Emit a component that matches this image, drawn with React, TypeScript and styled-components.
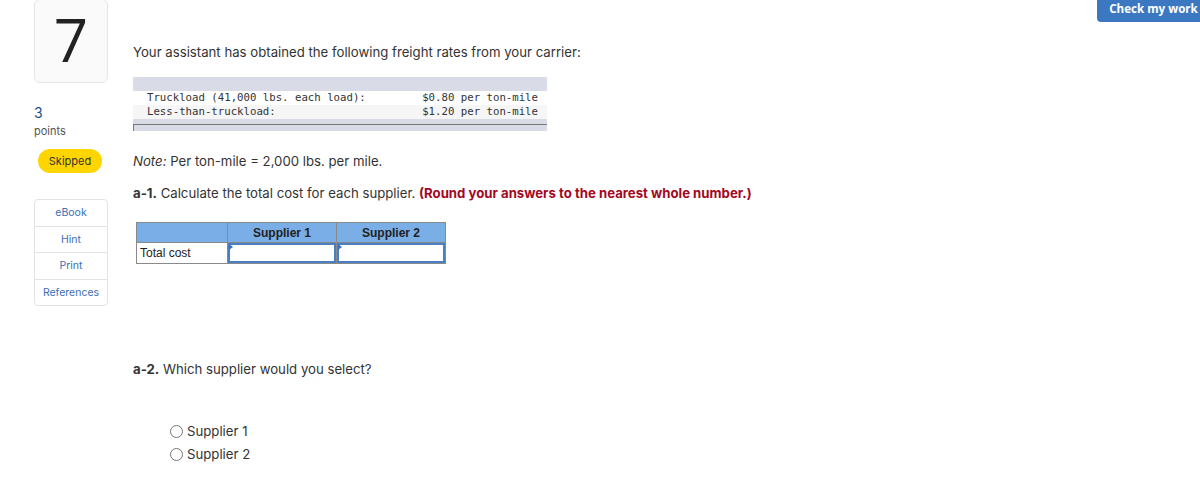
import React from 'react';
import styled, { createGlobalStyle } from 'styled-components';

const GlobalStyle = createGlobalStyle`
  html, body {
    margin: 0;
    padding: 0;
    background: #ffffff;
    font-family: 'Inter', 'Open Sans', sans-serif;
    color: #333333;
  }
`;

const Page = styled.div`
  display: flex;
  height: 490px;
  position: relative;
  width: 1200px;
`;

const Sidebar = styled.div`
  box-sizing: border-box;
  display: flex;
  flex-direction: column;
  padding-left: 34px;
  width: 133px;
`;

const NumberCard = styled.div`
  align-items: center;
  background: #fafafa;
  border: 1px solid #e6e6e6;
  border-radius: 6px;
  box-sizing: border-box;
  color: #222;
  display: flex;
  font-family: 'Open Sans', sans-serif;
  font-size: 60px;
  font-weight: 400;
  height: 84px;
  justify-content: center;
  line-height: 1;
  margin-top: -1px;
  padding-bottom: 4px;
  width: 74px;
`;

const Points = styled.div`
  color: #1b4f8a;
  font-size: 14px;
  line-height: 16px;
  margin-top: 22px;
`;

const PointsLabel = styled.div`
  color: #555;
  font-size: 11px;
  line-height: 14px;
  margin-top: 3px;
`;

const SkippedPill = styled.div`
  align-items: center;
  background: #ffd500;
  border-radius: 12px;
  color: #333;
  display: flex;
  font-size: 11px;
  height: 24px;
  justify-content: center;
  margin: 11px 0 0 4px;
  width: 64px;
`;

const LinkGroup = styled.div`
  border: 1px solid #e3e3e3;
  border-radius: 4px;
  display: flex;
  flex-direction: column;
  margin-top: 26px;
  width: 72px;
`;

const LinkItem = styled.div<{ $last?: boolean }>`
  align-items: center;
  border-bottom: ${(p) => (p.$last ? 'none' : '1px solid #e3e3e3')};
  color: #3b6fb6;
  display: flex;
  font-size: 10.5px;
  height: 25.5px;
  justify-content: center;
`;

const Main = styled.div`
  align-items: flex-start;
  display: flex;
  flex-direction: column;
  padding-top: 44px;
  width: 640px;
`;

const Paragraph = styled.p<{ $mt?: number }>`
  font-size: 13.2px;
  line-height: 16px;
  margin: ${(p) => p.$mt ?? 0}px 0 0 0;
`;

const RateBox = styled.div`
  background: #d9dce6;
  box-sizing: border-box;
  margin-top: 17px;
  padding: 14px 0 0 0;
  width: 414px;
`;

const RateRow = styled.div<{ $shade?: boolean }>`
  background: ${(p) => (p.$shade ? '#f6f6f6' : '#ffffff')};
  display: flex;
  font-family: 'DejaVu Sans Mono', 'Liberation Mono', monospace;
  font-size: 10.7px;
  height: 14px;
  justify-content: space-between;
  line-height: 14px;
  padding: 0 9px 0 14px;
  white-space: pre;
`;

const ScrollBar = styled.div`
  border-left: 1px solid #777;
  border-top: 1px solid #777;
  height: 6px;
  margin-top: 5px;
`;

const Emph = styled.span`
  font-style: italic;
`;

const Strong = styled.span`
  font-weight: 700;
`;

const Warning = styled.span`
  color: #a3081f;
  font-weight: 700;
`;

const AnswerTable = styled.table`
  border-collapse: collapse;
  font-family: 'Liberation Sans', Arial, sans-serif;
  font-size: 12px;
  margin: 21px 0 0 3px;
  table-layout: fixed;
  width: 306px;
`;

const HeadCell = styled.th<{ $w: number }>`
  background: #7aaee6;
  border: 1px solid #8a8a8a;
  color: #222;
  font-weight: 700;
  height: 19px;
  padding: 0;
  text-align: center;
  width: ${(p) => p.$w}px;
`;

const LabelCell = styled.td`
  border: 1px solid #8a8a8a;
  color: #222;
  height: 19px;
  padding: 0 3px;
`;

const InputCell = styled.td`
  border: 1px solid #8a8a8a;
  padding: 0;
  position: relative;
`;

const AnswerInput = styled.div`
  border: 2px solid #4a7fc4;
  box-sizing: border-box;
  height: 20px;
  width: 100%;
`;

const Marker = styled.span`
  border-bottom: 3px solid transparent;
  border-left: 4px solid #3b72c4;
  border-top: 3px solid transparent;
  height: 0;
  left: 1px;
  position: absolute;
  top: 1px;
  width: 0;
`;

const Options = styled.div`
  display: flex;
  flex-direction: column;
  gap: 7px;
  margin: 46px 0 0 37px;
`;

const Option = styled.label`
  align-items: center;
  display: flex;
  font-size: 13.2px;
  gap: 4px;
  line-height: 16px;
`;

const Radio = styled.span`
  border: 1px solid #767676;
  border-radius: 50%;
  box-sizing: border-box;
  display: inline-block;
  height: 13px;
  width: 13px;
`;

const CheckButton = styled.button`
  background: #3c78c2;
  border: none;
  border-radius: 0 0 0 4px;
  color: #ffffff;
  font-family: 'Open Sans', sans-serif;
  font-size: 11.6px;
  font-weight: 700;
  height: 22px;
  line-height: 18px;
  padding: 0 0 4px 10px;
  position: absolute;
  right: 0;
  text-align: center;
  top: 0;
  white-space: nowrap;
  width: 103px;
`;

export default function App() {
  return (
    <>
      <GlobalStyle />
      <Page>
        <Sidebar>
          <NumberCard>7</NumberCard>
          <Points>3</Points>
          <PointsLabel>points</PointsLabel>
          <SkippedPill>Skipped</SkippedPill>
          <LinkGroup>
            <LinkItem>eBook</LinkItem>
            <LinkItem>Hint</LinkItem>
            <LinkItem>Print</LinkItem>
            <LinkItem $last>References</LinkItem>
          </LinkGroup>
        </Sidebar>
        <Main>
          <Paragraph>Your assistant has obtained the following freight rates from your carrier:</Paragraph>
          <RateBox>
            <RateRow>
              <span>Truckload (41,000 lbs. each load):</span>
              <span>$0.80 per ton-mile</span>
            </RateRow>
            <RateRow $shade>
              <span>Less-than-truckload:</span>
              <span>$1.20 per ton-mile</span>
            </RateRow>
            <ScrollBar />
          </RateBox>
          <Paragraph $mt={22}>
            <Emph>Note:</Emph> Per ton-mile = 2,000 lbs. per mile.
          </Paragraph>
          <Paragraph $mt={16}>
            <Strong>a-1.</Strong> Calculate the total cost for each supplier.{' '}
            <Warning>(Round your answers to the nearest whole number.)</Warning>
          </Paragraph>
          <AnswerTable>
            <thead>
              <tr>
                <HeadCell $w={90} />
                <HeadCell $w={108}>Supplier 1</HeadCell>
                <HeadCell $w={108}>Supplier 2</HeadCell>
              </tr>
            </thead>
            <tbody>
              <tr>
                <LabelCell>Total cost</LabelCell>
                <InputCell>
                  <AnswerInput />
                  <Marker />
                </InputCell>
                <InputCell>
                  <AnswerInput />
                  <Marker />
                </InputCell>
              </tr>
            </tbody>
          </AnswerTable>
          <Paragraph $mt={97}>
            <Strong>a-2.</Strong> Which supplier would you select?
          </Paragraph>
          <Options>
            <Option>
              <Radio />
              Supplier 1
            </Option>
            <Option>
              <Radio />
              Supplier 2
            </Option>
          </Options>
        </Main>
        <CheckButton>Check my work</CheckButton>
      </Page>
    </>
  );
}
